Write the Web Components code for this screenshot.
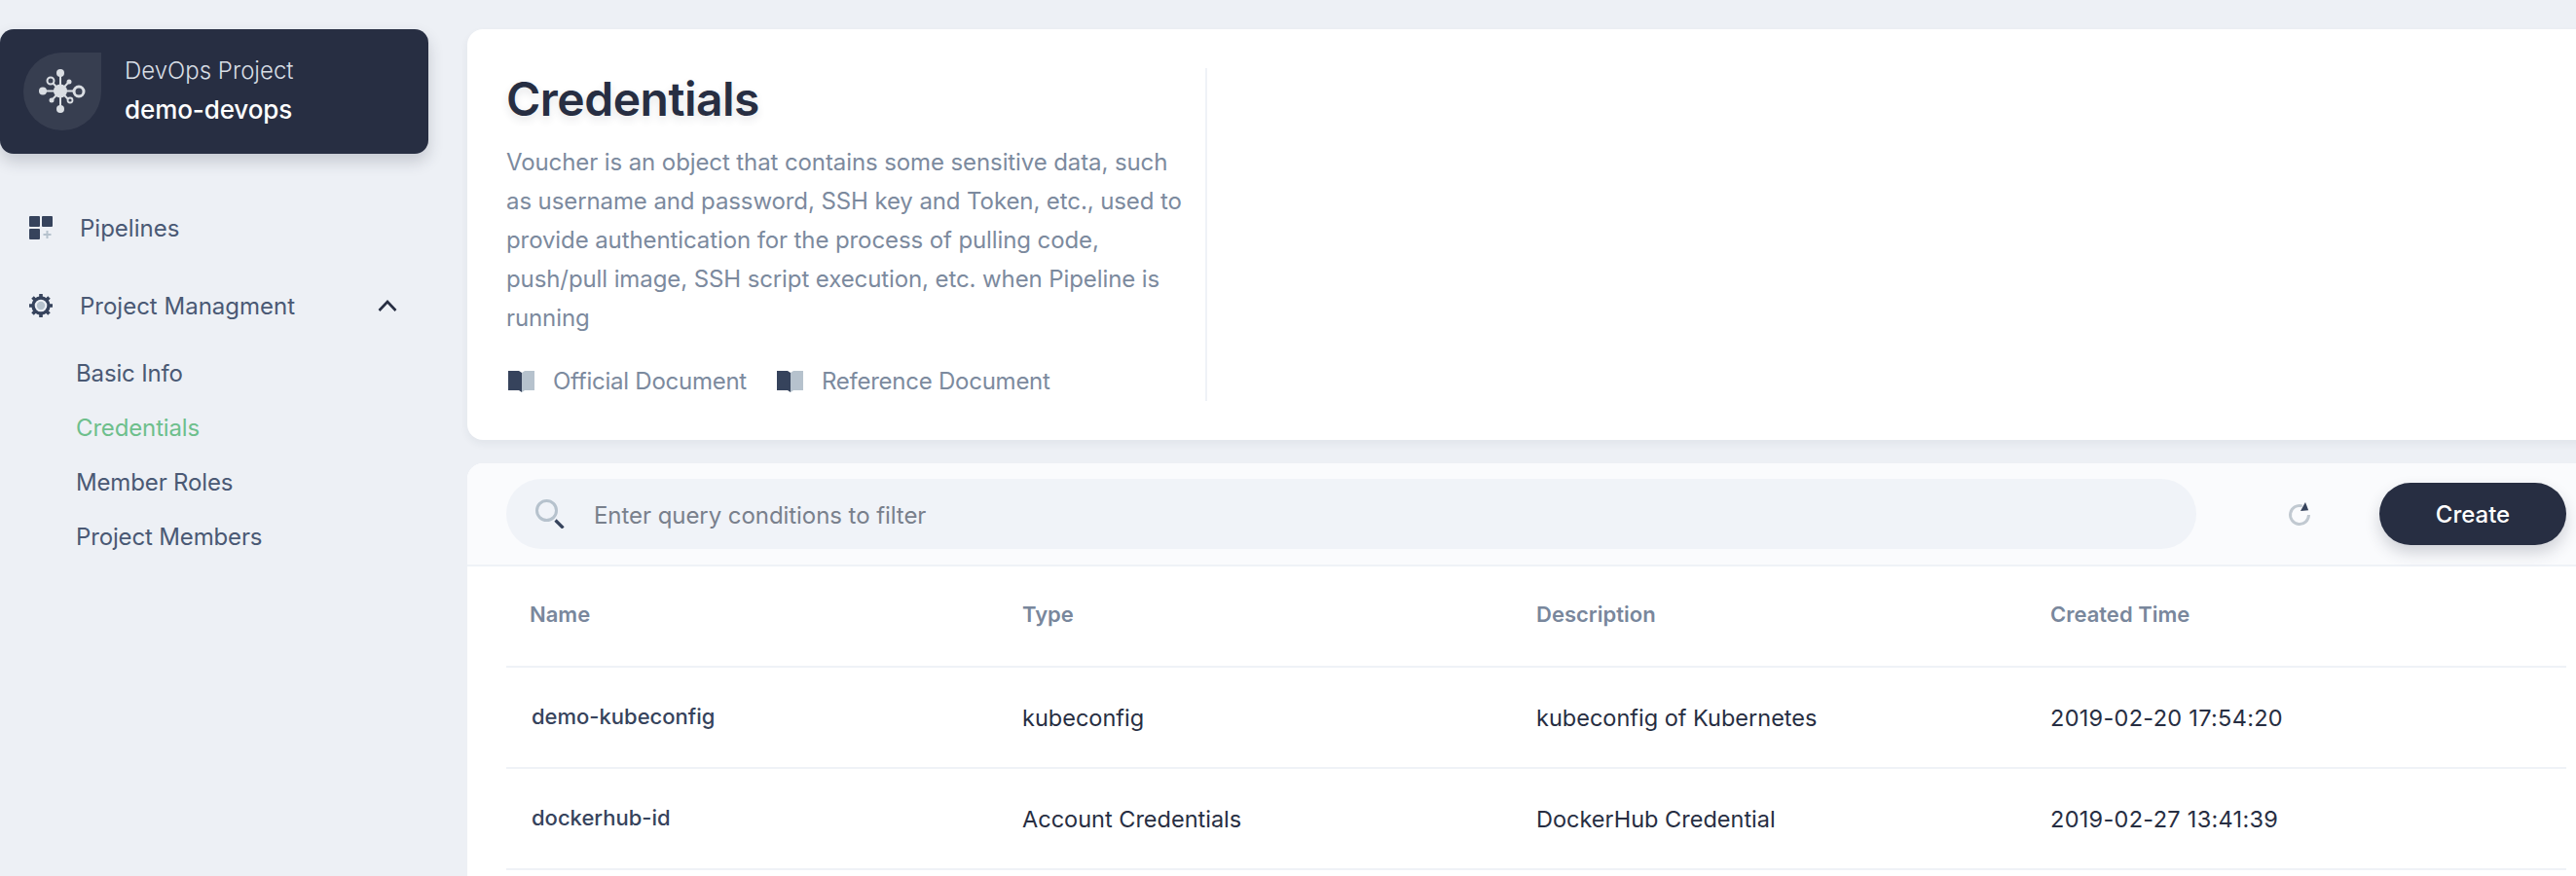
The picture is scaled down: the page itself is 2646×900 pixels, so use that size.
<!DOCTYPE html>
<html lang="en">
<head>
<meta charset="utf-8">
<title>Credentials</title>
<style>
    html, body { margin: 0; height: 100%; overflow: hidden; background: #edf0f5; }
    body { font-family: Inter, "Noto Sans", sans-serif; color: #272e42; }
</style>
</head>
<body>
<ks-layout>
    <ks-sidebar slot="side">
        <ks-project label="DevOps Project" name="demo-devops"></ks-project>
        <ks-nav-item icon="pipelines" style="margin-top:52px">Pipelines</ks-nav-item>
        <ks-nav-item icon="gear" open style="margin-top:32px">Project Managment</ks-nav-item>
        <ks-sub-nav>
            <ks-sub-item>Basic Info</ks-sub-item>
            <ks-sub-item active>Credentials</ks-sub-item>
            <ks-sub-item>Member Roles</ks-sub-item>
            <ks-sub-item>Project Members</ks-sub-item>
        </ks-sub-nav>
    </ks-sidebar>
    <ks-banner slot="main" heading="Credentials">
        Voucher is an object that contains some sensitive data, such as username and password, SSH key and Token, etc., used to provide authentication for the process of pulling code, push/pull image, SSH script execution, etc. when Pipeline is running
        <ks-doc-link slot="links">Official Document</ks-doc-link>
        <ks-doc-link slot="links">Reference Document</ks-doc-link>
    </ks-banner>
    <ks-panel slot="main">
        <ks-toolbar slot="toolbar" placeholder="Enter query conditions to filter" action="Create"></ks-toolbar>
        <ks-row head>
            <span>Name</span><span>Type</span><span>Description</span><span>Created Time</span>
        </ks-row>
        <ks-row>
            <b>demo-kubeconfig</b><span>kubeconfig</span><span>kubeconfig of Kubernetes</span><span>2019-02-20 17:54:20</span>
        </ks-row>
        <ks-row>
            <b>dockerhub-id</b><span>Account Credentials</span><span>DockerHub Credential</span><span>2019-02-27 13:41:39</span>
        </ks-row>
    </ks-panel>
</ks-layout>

<script>
// every element here is just a shadow root with its own <style>, made by this helper
const define = (tag, html, init) => {
    const tmp = document.createElement('template');
    tmp.innerHTML = html;
    customElements.define(tag, class extends HTMLElement {
        constructor() {
            super();
            this.attachShadow({mode: 'open'}).appendChild(tmp.content.cloneNode(true));
            if (init) init(this, this.shadowRoot);
        }
    });
};

const ICONS = {
    pipelines: `<svg width="24" height="24" viewBox="0 0 24 24">
        <rect x="0" y="0" width="11" height="11" rx="1" fill="#36435c"/>
        <rect x="13" y="0" width="11" height="11" rx="1" fill="#36435c"/>
        <rect x="0" y="13" width="11" height="11" rx="1" fill="#36435c"/>
        <path d="M18.5 15v8M14.500 19h8" stroke="#b6c2cd" stroke-width="2" fill="none"/>
    </svg>`,
    gear: `<svg width="24" height="24" viewBox="0 0 24 24">
        <circle cx="12" cy="12" r="8" fill="none" stroke="#36435c" stroke-width="3.400"/>
        <path d="M12 0v4M12 20v4M0 12h4M20 12h4M3.500 3.500l2.800 2.800M17.700 17.700l2.800 2.800M3.500 20.500l2.800-2.800M17.700 6.300l2.800-2.800" stroke="#36435c" stroke-width="3.600" fill="none"/>
        <circle cx="12" cy="12" r="4.200" fill="#b6c2cd"/>
    </svg>`
};

define('ks-layout', `
    <style>
        :host { display: flex; gap: 40px; padding-top: 30px; margin-right: -30px; }
        .side { width: 440px; flex: none; }
        .main { flex: 1; min-width: 0; display: flex; flex-direction: column; gap: 24px; }
    </style>
    <div class="side"><slot name="side"></slot></div>
    <div class="main"><slot name="main"></slot></div>`);

define('ks-sidebar', `
    <style>:host { display: block; }</style>
    <slot></slot>`);

define('ks-project', `
    <style>
        :host {
            display: flex; align-items: center; height: 128px; box-sizing: border-box; padding-left: 24px;
            background: #272e42; border-radius: 14px; color: #fff;
            box-shadow: 0 8px 16px 0 rgba(39, 46, 66, .2);
        }
        .drop {
            width: 80px; height: 80px; flex: none; display: flex;
            background: rgba(255, 255, 255, .08); border-radius: 50% 0 50% 50%;
        }
        .txt { margin-left: 24px; margin-top: -2px; }
        .label { font-size: 24px; line-height: 40px; color: #d8dee5; font-weight: 300; }
        .name { font-size: 26px; line-height: 40px; font-weight: 500; letter-spacing: -.1px; }
    </style>
    <div class="drop">
        <svg width="80" height="80" viewBox="0 0 80 80" fill="#dadee3" stroke="#dadee3">
            <path d="M38 20v40M20 39.500h37M28 29l20 21M47 30L29 49" stroke-width="2" fill="none"/>
            <circle cx="38" cy="39.500" r="7" stroke="none"/>
            <circle cx="38" cy="21" r="4" stroke="none"/>
            <circle cx="38" cy="58" r="4" stroke="none"/>
            <circle cx="20" cy="39.500" r="4" stroke="none"/>
            <circle cx="47" cy="30" r="2.500" stroke="none"/>
            <circle cx="29" cy="49" r="2.500" stroke="none"/>
            <circle cx="57" cy="40" r="5" fill="#3c4355" stroke-width="3"/>
            <circle cx="28" cy="29" r="3.500" fill="#3c4355" stroke-width="2"/>
            <circle cx="48" cy="49" r="2.500" fill="#3c4355" stroke-width="1.800"/>
        </svg>
    </div>
    <div class="txt">
        <div class="label"></div>
        <div class="name"></div>
    </div>`, (el, root) => {
        root.querySelector('.label').textContent = el.getAttribute('label');
        root.querySelector('.name').textContent = el.getAttribute('name');
    });

define('ks-nav-item', `
    <style>
        :host {
            display: flex; align-items: center; height: 48px; padding-left: 30px; padding-right: 32px;
            font-size: 24px; color: #4a5974;
        }
        .ic { width: 24px; height: 24px; flex: none; display: flex; }
        .txt { margin-left: 28px; flex: 1; }
        .chev { display: none; }
        :host([open]) .chev { display: block; }
    </style>
    <span class="ic"></span>
    <span class="txt"><slot></slot></span>
    <svg class="chev" width="20" height="14" viewBox="0 0 20 14"><path d="M1.500 12L10 3l8.500 9" fill="none" stroke="#272e42" stroke-width="2.600"/></svg>`,
    (el, root) => { root.querySelector('.ic').innerHTML = ICONS[el.getAttribute('icon')]; });

define('ks-sub-nav', `
    <style>:host { display: flex; flex-direction: column; padding: 18px 0 0 78px; }</style>
    <slot></slot>`);

define('ks-sub-item', `
    <style>
        :host { display: block; height: 56px; line-height: 56px; font-size: 24px; color: #4a5974; letter-spacing: -.15px; }
        :host([active]) { color: #6ebf8c; }
    </style>
    <slot></slot>`);

define('ks-banner', `
    <style>
        :host {
            display: block; height: 422px; box-sizing: border-box; padding: 40px;
            background: #fff; border-radius: 16px; box-shadow: 0 4px 8px 0 rgba(39, 46, 66, .06);
        }
        .col { width: 720px; height: 342px; box-sizing: border-box; padding-right: 10px; border-right: 2px solid #eff2f7; }
        h1 {
            margin: 0; font-size: 48px; line-height: 64px; font-weight: 600; color: #272e42; letter-spacing: -.5px;
            text-shadow: 0 4px 8px rgba(39, 46, 66, .12);
        }
        p { margin: 13px 0 0; font-size: 24px; line-height: 40px; color: #7c8a9e; letter-spacing: -.1px; }
        .links { display: flex; gap: 29px; margin-top: 29px; }
    </style>
    <div class="col">
        <h1></h1>
        <p><slot></slot></p>
        <div class="links"><slot name="links"></slot></div>
    </div>`, (el, root) => { root.querySelector('h1').textContent = el.getAttribute('heading'); });

define('ks-doc-link', `
    <style>
        :host { display: flex; align-items: center; font-size: 24px; line-height: 32px; color: #7c8a9e; letter-spacing: -.25px; }
        svg { margin: 0 19px 0 2px; flex: none; }
    </style>
    <svg width="27" height="22" viewBox="0 0 27 22">
        <path d="M0 0h11l3 2v20l-3-2H0z" fill="#36435c"/>
        <path d="M14 2l3-2h10v20H17l-3 2z" fill="#b6c2cd"/>
    </svg>
    <slot></slot>`);

define('ks-panel', `
    <style>
        :host { display: block; background: #fff; border-radius: 16px 16px 0 0; padding-bottom: 40px; }
        .rows { padding: 0 40px; }
    </style>
    <slot name="toolbar"></slot>
    <div class="rows"><slot></slot></div>`);

define('ks-toolbar', `
    <style>
        :host {
            display: flex; align-items: center; height: 106px; box-sizing: border-box; padding: 0 40px;
            background: #fafbfd; border-bottom: 2px solid #eff2f7; border-radius: 16px 16px 0 0;
        }
        .search {
            flex: 1; height: 72px; box-sizing: border-box; padding-left: 30px; display: flex; align-items: center;
            background: #f0f3f8; border-radius: 36px;
        }
        .ph { margin: 2px 0 0 30px; font-size: 24px; color: #79808c; letter-spacing: -.06px; }
        .refresh { margin: 2px 70px 0 94px; flex: none; display: block; }
        button {
            width: 192px; height: 64px; flex: none; border: 0; border-radius: 32px; padding: 0;
            background: #272e42; color: #fff; font: 500 24px Inter, "Noto Sans", sans-serif;
            box-shadow: 0 8px 16px 0 rgba(39, 46, 66, .2);
        }
    </style>
    <div class="search">
        <svg width="30" height="30" viewBox="0 0 30 30" fill="none">
            <circle cx="11.500" cy="11.500" r="10" stroke="#b6c2cd" stroke-width="3"/>
            <path d="M20.500 21.500l8 8" stroke="#36435c" stroke-width="3.200"/>
        </svg>
        <span class="ph"></span>
    </div>
    <svg class="refresh" width="24" height="26" viewBox="0 0 24 26" fill="none">
        <path d="M14.800 3.900A9.500 9.500 0 1 0 21.500 13" stroke="#c1c9d1" stroke-width="3"/>
        <path d="M18 0l3.200 8.200L13 9z" fill="#36435c"/>
    </svg>
    <button></button>`, (el, root) => {
        root.querySelector('.ph').textContent = el.getAttribute('placeholder');
        root.querySelector('button').textContent = el.getAttribute('action');
    });

define('ks-row', `
    <style>
        :host {
            display: grid; grid-template-columns: 530px 528px 528px 1fr; align-items: center;
            height: 104px; box-sizing: border-box; border-bottom: 2px solid #eff2f7;
            font-size: 23.500px; color: #272e42;
        }
        :host([head]) { color: #79879c; font-weight: 600; font-size: 22px; padding-bottom: 5px; }
        ::slotted(:first-child) { padding-left: 26px; }
        :host([head]) ::slotted(:first-child) { padding-left: 24px; }
        ::slotted(b) { font-size: 22px; font-weight: 500; color: #36435c; margin-top: -2px; }
        ::slotted(span:last-child) { letter-spacing: .3px; }
        :host([head]) ::slotted(span:last-child) { letter-spacing: 0; }
    </style>
    <slot></slot>`);
</script>
</body>
</html>
